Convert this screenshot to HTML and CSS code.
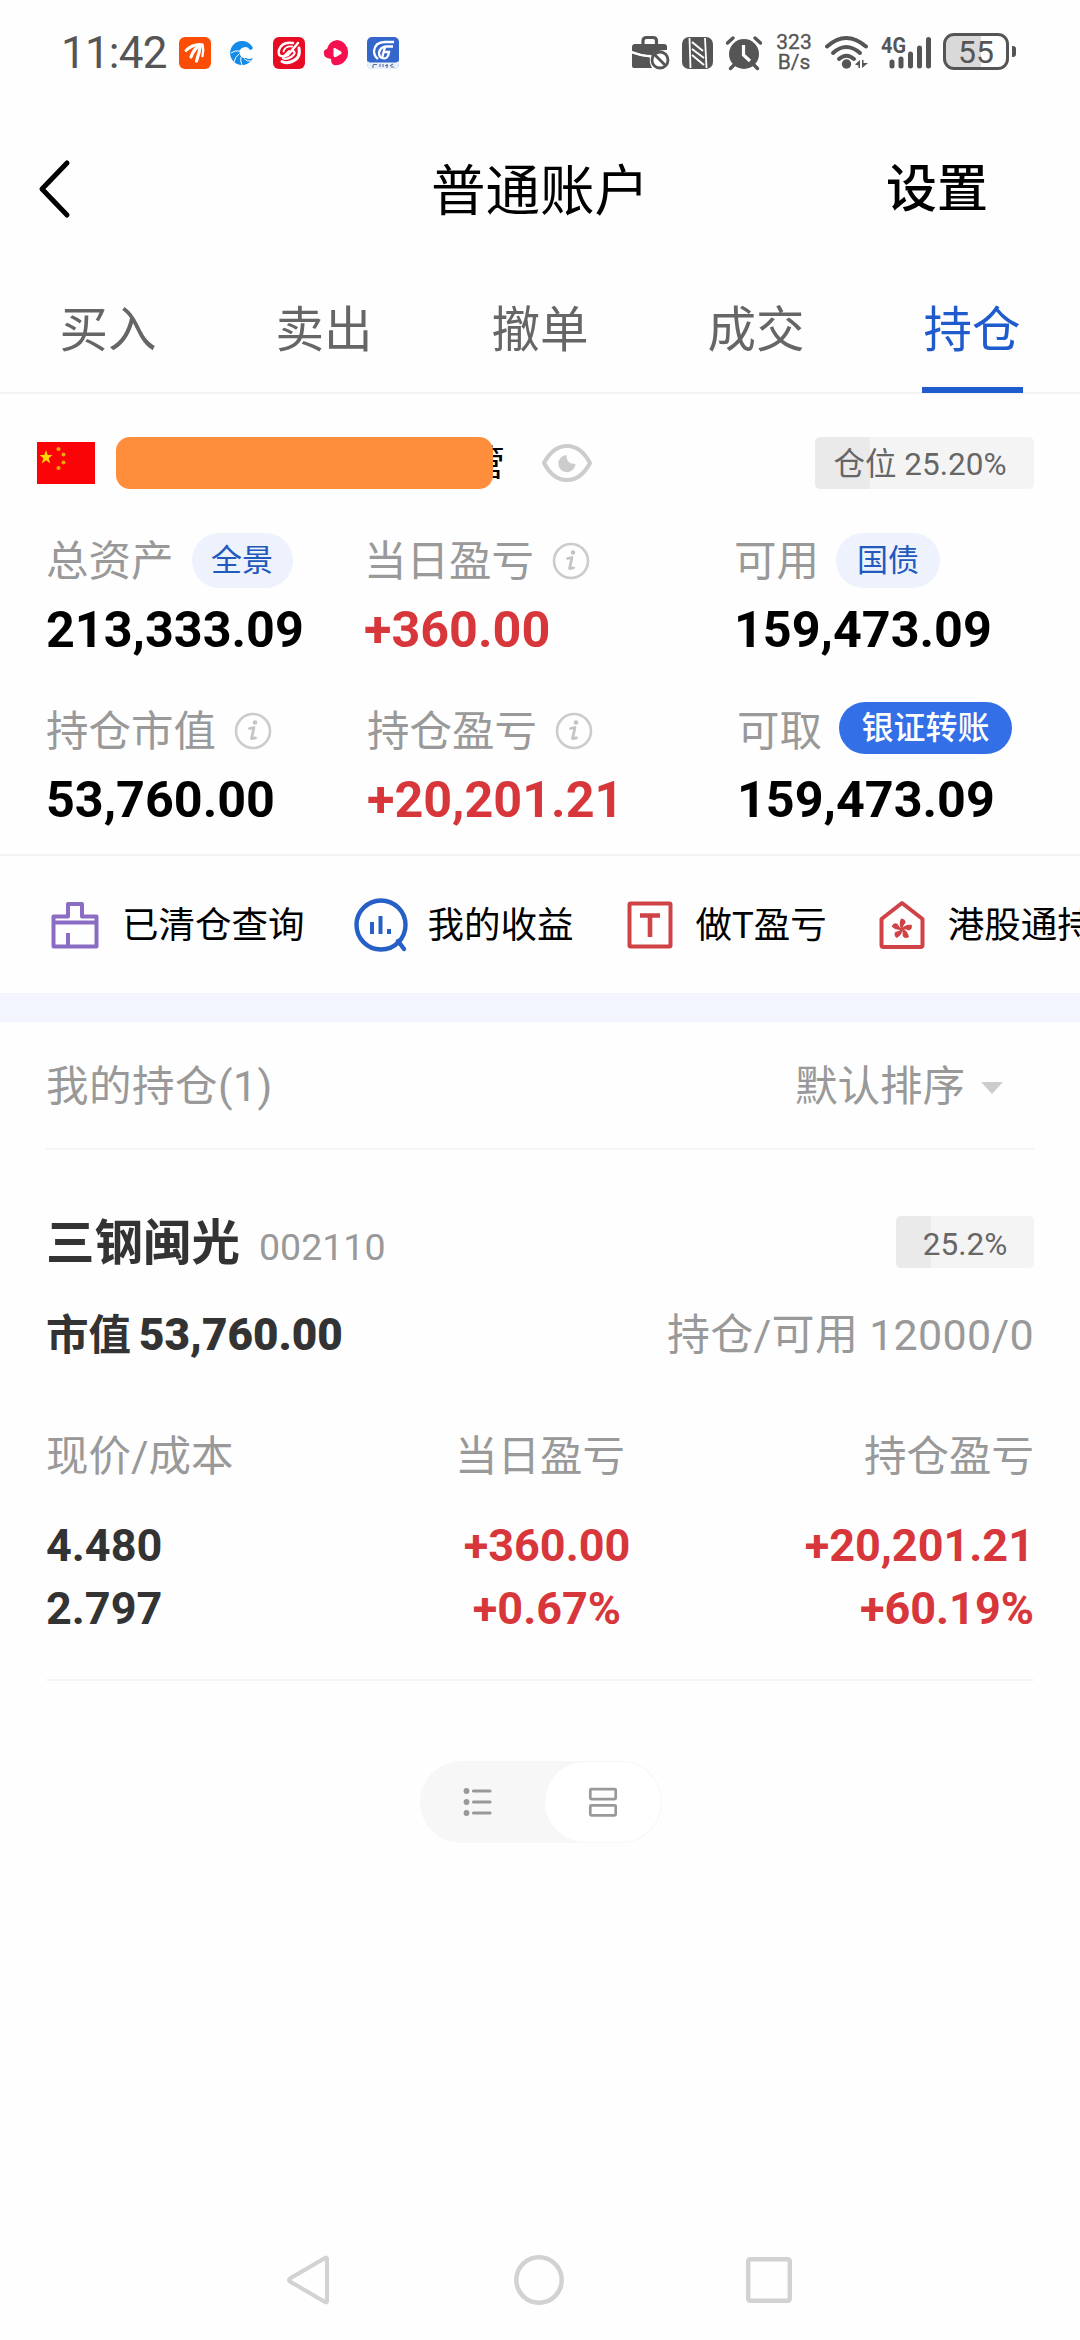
FILE: index.html
```html
<!DOCTYPE html>
<html lang="zh-CN">
<head>
<meta charset="utf-8">
<title>普通账户</title>
<link rel="stylesheet" href="styles.css">
</head>
<body>
<svg class="defs" width="0" height="0" aria-hidden="true">
  <symbol id="info" viewBox="0 0 38 38">
    <circle cx="19" cy="19" r="17" fill="none" stroke="#ccc" stroke-width="2.6"/>
    <circle cx="21" cy="10.5" r="2.3" fill="#c4c4c4"/>
    <path d="M15.5 16.5 L20 15.5 L17.5 26.5 L21.5 25.8" fill="none" stroke="#c4c4c4" stroke-width="2.8" stroke-linecap="round" stroke-linejoin="round"/>
  </symbol>
</svg>
<div class="screen">
  <header class="status">
    <span class="clock">11:42</span>
    <svg class="s-app1" width="32" height="32" viewBox="0 0 32 32"><rect width="32" height="32" rx="6" fill="#fb4d05"/><g fill="none" stroke="#fff" stroke-linecap="round"><path d="M7 13.500 Q13 7.500 21 7.500" stroke-width="3"/><path d="M12 20 Q14.500 12 21.500 8" stroke-width="3.200"/><path d="M17.500 24 Q20.500 15 21.500 8" stroke-width="3.200"/><path d="M23.500 19 Q25 13 23.500 7.500" stroke-width="2.400"/></g></svg>
    <svg class="s-app2" width="25" height="25" viewBox="0 0 25 25"><path d="M24 7 A12 12 0 1 0 24 17 Q20 19 17 17 A5.500 5.500 0 1 1 21 9 Q23 9 24 7Z" fill="#138be8"/><path d="M11 10 Q6 9 2 12 M10.500 12.500 Q6 16 5 21 M12 16 Q11 20 13 24 M15 17.500 Q18 21 22 20" fill="none" stroke="#fff" stroke-width="1"/></svg>
    <svg class="s-app3" width="32" height="32" viewBox="0 0 32 32"><rect width="32" height="32" rx="6" fill="#e80b24"/><g fill="none" stroke="#fff" stroke-linecap="round"><path d="M20 6 Q9 4 6 13 Q4 22 15 18 L25 6" stroke-width="2.500"/><path d="M19 9.500 Q12 9 10.500 14.500 M16 14 L12 18" stroke-width="1.800"/><path d="M20 14 Q24 16 18 20 Q13 23 10 21" stroke-width="2.200"/><path d="M26 11 Q28 21 19 24.500 Q13 27 9 24.500" stroke-width="3"/></g></svg>
    <svg class="s-app4" width="26" height="26" viewBox="0 0 26 26"><path d="M14 0 A12 12 0 0 1 25 13 A12 12 0 0 1 11 25 Q8 24 8 19 Q1 18 1 14 Q0 10 4 9 Q6 1 14 0Z" fill="#f51150"/><path d="M10.500 9 Q10.500 7.500 12 8 L18 11.500 Q19.500 13 18 14 L13 17 Q11 17.500 10.500 16Z" fill="#fff"/></svg>
    <svg class="s-app5" width="32" height="32" viewBox="0 0 32 32"><rect width="32" height="32" rx="5" fill="#3566cc"/><path d="M0 24 L3 25.500 H29 L32 24 V27 Q32 32 27 32 H5 Q0 32 0 27Z" fill="#e9f0fb"/><g fill="none" stroke="#fff" stroke-width="2.300"><path d="M27 5 H18 Q8 5 7 14 Q7 19 11 22"/><path d="M26 9.500 H19 Q13 10 12 16 Q12 20 15 21 Q21 23 22 15 H17"/><path d="M18 10 L15 21"/></g><path d="M6 28 V31 M6 27.500 H10 M13 27 V30 M16 27 V30 M18 28.500 H21 M20 27 V31 M23 29 L26 27 M24 30 H27" stroke="#57709c" stroke-width="1.100"/></svg>
    <svg class="s-case" width="38" height="36" viewBox="0 0 38 36"><path d="M11 9 V6 Q11 2.500 14.500 2.500 H21 Q24.500 2.500 24.500 6 V9" fill="none" stroke="#555" stroke-width="3.200"/><path d="M0 16 V12 Q0 9 3 9 H32 Q35 9 35 12 V15 Q23 14.500 19.500 21 Q10 20 0 16Z" fill="#555"/><path d="M0 18.500 Q9 22 18 22.500 Q17 28 20 33 H2 Q0 33 0 31Z" fill="#555"/><path d="M0 17.200 Q9 20.700 19.500 21" stroke="#fff" stroke-width="1.800" fill="none"/><circle cx="28" cy="25" r="8" fill="#fff" stroke="#555" stroke-width="2.800"/><path d="M22.500 19.500 L33.500 30.500" stroke="#555" stroke-width="2.800"/></svg>
    <svg class="s-nfc" width="32" height="32" viewBox="0 0 32 32"><rect width="31" height="32" rx="7" fill="#555"/><path d="M7.500 1 L8.500 31 M23 1 L24.500 31" fill="none" stroke="#fff" stroke-width="1.800"/><path d="M10 5 L21 14 M10 12 L22 21 M10 18 L22 28" fill="none" stroke="#fff" stroke-width="2"/></svg>
    <svg class="s-alarm" width="38" height="36" viewBox="0 0 38 36"><circle cx="19" cy="19" r="15" fill="#555"/><path d="M2.500 8 L8 3 M35.500 8 L30 3 M9 30 L5.500 33.500 M29 30 L32.500 33.500" stroke="#555" stroke-width="3.400" stroke-linecap="round"/><path d="M18.500 10 V20 L25 26" stroke="#fff" stroke-width="3.200" fill="none"/></svg>
    <div class="rate"><span>323</span><span>B/s</span></div>
    <svg class="s-wifi" width="46" height="36" viewBox="0 0 46 36"><g fill="none" stroke="#555" stroke-width="4" stroke-linecap="round"><path d="M3 11.500 Q22 -5.500 42 11.500"/><path d="M9 18 Q22 6 36 18"/><path d="M15 24 Q22.500 17.500 30 24"/></g><circle cx="22.500" cy="29" r="4.700" fill="#555"/><path d="M31 29.500 L36 25 V33 H34.500 V30.500Z M38 25 H39.500 V28 H44 L38 33Z" fill="#555"/></svg>
    <svg class="s-signal" width="56" height="44" viewBox="-4 -4 56 44"><text class="net" x="0" y="17.500" textLength="25" lengthAdjust="spacingAndGlyphs">4G</text><g stroke="#555" stroke-width="5" stroke-linecap="round"><path d="M11 27 V31 M20 24 V31 M29.500 19 V31 M38.500 13 V31 M47.500 4.500 V31"/></g></svg>
    <div class="battery"><span>55</span></div><i class="nub"></i>
  </header>

  <nav class="titlebar">
    <svg class="back" width="36" height="60" viewBox="0 0 36 60"><path d="M31 4 L6 30 L31 56" fill="none" stroke="#000" stroke-width="5" stroke-linecap="round" stroke-linejoin="round"/></svg>
    <h1>普通账户</h1>
    <a class="settings">设置</a>
  </nav>

  <nav class="tabs">
    <a><span>买入</span></a><a><span>卖出</span></a><a><span>撤单</span></a><a><span>成交</span></a><a class="active"><span>持仓</span></a>
  </nav>

  <section class="account">
    <svg class="flag" width="58" height="42" viewBox="0 0 58 42"><rect width="58" height="42" fill="#fb0407"/><path d="M9 8 L10.700 13 H15.500 L11.700 16.200 L13.200 21.500 L9 18.300 L4.800 21.500 L6.300 16.200 L2.500 13 H7.300Z" fill="#ffd800"/><g fill="#e9a40a"><circle cx="21.500" cy="7" r="2.100"/><circle cx="26.500" cy="12.500" r="2"/><circle cx="26.500" cy="20.500" r="2"/><circle cx="21.500" cy="26" r="2.100"/></g></svg>
    <span class="mask"></span><span class="owner">管</span>
    <svg class="eye" width="50" height="38" viewBox="0 0 50 38"><path d="M2 19 Q11 2 25 2 Q39 2 48 19 Q39 36 25 36 Q11 36 2 19Z" fill="none" stroke="#ccc" stroke-width="4" stroke-linejoin="round"/><path d="M24.500 11 Q24 20 33.500 20 A8.600 8.600 0 1 1 24.500 11Z" fill="#ccc"/></svg>
    <span class="ratio ratio-lg"><b>仓位 25.20%</b></span>
  </section>

  <section class="summary">
    <div class="cell"><div class="label"><span>总资产</span><em class="tag t1">全景</em></div><div class="value">213,333.09</div></div>
    <div class="cell"><div class="label"><span>当日盈亏</span><svg class="info"><use href="#info"/></svg></div><div class="value up">+360.00</div></div>
    <div class="cell"><div class="label"><span>可用</span><em class="tag t2">国债</em></div><div class="value">159,473.09</div></div>
  </section>
  <section class="summary second">
    <div class="cell"><div class="label"><span>持仓市值</span><svg class="info"><use href="#info"/></svg></div><div class="value">53,760.00</div></div>
    <div class="cell"><div class="label"><span>持仓盈亏</span><svg class="info"><use href="#info"/></svg></div><div class="value up">+20,201.21</div></div>
    <div class="cell"><div class="label"><span>可取</span><em class="tag solid">银证转账</em></div><div class="value">159,473.09</div></div>
  </section>

  <section class="shortcuts">
    <a class="q1"><svg width="48" height="50" viewBox="0 0 48 50"><g fill="none" stroke="#8a6cc4" stroke-width="4" stroke-linejoin="round"><path d="M2.500 16.500 H17 V4 H31 V16.500 H45.500 V46.500 H2.500Z"/><path d="M2.500 22.500 H45.500 M17 46 V33"/></g></svg><span>已清仓查询</span></a>
    <a class="q2"><svg width="54" height="54" viewBox="0 0 54 54"><circle cx="27" cy="27" r="24.500" fill="none" stroke="#265fc6" stroke-width="4.400"/><path d="M44 43 L50 51" stroke="#265fc6" stroke-width="4.400" stroke-linecap="round"/><path d="M18 24 V36 M26.500 18 V36 M35 31 V36" stroke="#265fc6" stroke-width="4"/></svg><span>我的收益</span></a>
    <a class="q3"><svg width="46" height="48" viewBox="0 0 46 48"><rect x="2.500" y="2.500" width="41" height="43" rx="1" fill="none" stroke="#cf4347" stroke-width="4"/><path d="M13 14.500 H33 M23 14.500 V36" stroke="#cf4347" stroke-width="4.600"/></svg><span>做T盈亏</span></a>
    <a class="q4"><svg width="46" height="50" viewBox="0 0 46 50"><path d="M2.500 19 L23 3 L43.500 19 V45 Q43.500 47 41.500 47 H4.500 Q2.500 47 2.500 45Z" fill="none" stroke="#cf4347" stroke-width="4" stroke-linejoin="round"/><g fill="#cf4347" transform="translate(23 29)"><path id="petal" d="M0 1 Q-4 -4 -1 -10.500 Q4 -10 3.500 -6 Q1 -4 0 1Z"/><use href="#petal" transform="rotate(72)"/><use href="#petal" transform="rotate(144)"/><use href="#petal" transform="rotate(216)"/><use href="#petal" transform="rotate(288)"/></g></svg><span>港股通持仓</span></a>
  </section>

  <div class="band"></div>

  <section class="holdings">
    <div class="list-head"><span>我的持仓(1)</span><span class="sort">默认排序<i></i></span></div>
    <article class="stock">
      <div class="name-row"><h2>三钢闽光</h2><span class="code">002110</span><span class="ratio ratio-sm"><b>25.2%</b></span></div>
      <div class="mv-row"><span class="mv">市值<b>53,760.00</b></span><span class="avail">持仓/可用 12000/0</span></div>
      <div class="trio heads"><span>现价/成本</span><span>当日盈亏</span><span>持仓盈亏</span></div>
      <div class="trio nums"><span>4.480</span><span class="up">+360.00</span><span class="up">+20,201.21</span></div>
      <div class="trio nums"><span>2.797</span><span class="up">+0.67%</span><span class="up">+60.19%</span></div>
    </article>
  </section>

  <div class="switch">
    <span class="opt"><svg width="30" height="30" viewBox="0 0 30 30"><g fill="#999"><circle cx="3.500" cy="4" r="2.900"/><circle cx="3.500" cy="15" r="2.900"/><circle cx="3.500" cy="26" r="2.900"/></g><path d="M10.500 4 H27 M10.500 15 H27 M10.500 26 H27" stroke="#999" stroke-width="3.200" stroke-linecap="round"/></svg></span>
    <span class="opt on"><svg width="30" height="30" viewBox="0 0 30 30"><g fill="none" stroke="#999" stroke-width="2.700"><rect x="2.300" y="2.100" width="25.400" height="10" rx="1"/><rect x="2.300" y="18.300" width="25.400" height="10" rx="1"/></g></svg></span>
  </div>

  <footer class="sysnav">
    <svg width="46" height="52" viewBox="0 0 46 52"><path d="M41 4.500 V47.500 Q40.500 49 39 48 L4 27.500 Q2 26 4 24.500 L39 4 Q40.500 3 41 4.500Z" fill="none" stroke="#d2d2d2" stroke-width="4"/></svg>
    <svg width="50" height="50" viewBox="0 0 50 50"><circle cx="25" cy="25" r="22.700" fill="none" stroke="#d2d2d2" stroke-width="4.500"/></svg>
    <svg width="46" height="46" viewBox="0 0 46 46"><rect x="2.200" y="2.200" width="41.600" height="41.600" rx="2" fill="none" stroke="#d2d2d2" stroke-width="4.400"/></svg>
  </footer>
</div>
</body>
</html>
```
FILE: styles.css
```css
* { box-sizing: border-box; margin: 0; padding: 0; }
body { background: #fefefe; font-family: Roboto, "Noto Sans CJK SC", sans-serif; color: #000; overflow: hidden; }
em, i { font-style: normal; }
svg { flex: none; display: block; }
.defs { display: none; }
.screen { width: 1080px; height: 2340px; overflow: hidden; display: flex; flex-direction: column; white-space: nowrap; line-height: 1; }
.screen > * { flex: none; }

.status { height: 106px; padding-left: 61px; display: flex; align-items: center; color: #555; }
.clock { width: 118px; font-size: 44px; letter-spacing: -0.8px; }
.s-app2 { margin-left: 18px; }
.s-app3 { margin-left: 19px; }
.s-app4 { margin-left: 18px; }
.s-app5 { margin-left: 18px; margin-right: 233px; }
.s-nfc { margin-left: 12px; }
.s-alarm { margin-left: 11px; }
.rate { width: 40px; margin: 0 0 2px 11px; display: flex; flex-direction: column; align-items: center; font-size: 21px; line-height: 20px; }
.rate span { height: 20px; -webkit-text-stroke: 0.3px #555; }
.s-wifi { margin-left: 10px; }
.s-signal { margin-left: 7px; }
.net { font: 700 22px Roboto, sans-serif; fill: #555; }
.battery { width: 66px; height: 37px; margin: 0 0 3px 10px; border: 3px solid #555; border-radius: 11px; background: linear-gradient(90deg, #d9d9d9 58%, #fefefe 58%); font-size: 32px; display: flex; align-items: center; justify-content: center; }
.nub { width: 4px; height: 11px; margin: 0 0 3px 3px; background: #555; border-radius: 0 3px 3px 0; }

.titlebar { height: 168px; display: grid; grid-template-columns: 260px 1fr 260px; align-items: center; }
.back { margin: 0 0 3px 36px; }
h1 { font-size: 54.500px; font-weight: 400; text-align: center; margin-top: 2px; }
.settings { font-size: 51px; font-weight: 500; margin: 0 0 1px 66px; }

.tabs { height: 120px; display: grid; grid-template-columns: repeat(5, 216px); border-bottom: 2px solid #f3f3f3; }
.tabs a { display: flex; justify-content: center; font-size: 48.500px; color: #666; }
.tabs span { width: 101px; height: 119px; padding-top: 33px; text-align: center; }
.tabs .active { color: #1f5bcc; }
.tabs .active span { border-bottom: 6px solid #1f5bcc; }

.account { height: 138px; padding: 0 46px 0 37px; display: flex; align-items: center; }
.mask { width: 377px; height: 52px; margin-left: 21px; border-radius: 14px; background: #ff8e3c; position: relative; z-index: 1; }
.owner { font-size: 36px; margin-left: -24px; padding-top: 2px; }
.eye { margin-left: 37px; margin-right: auto; }
.ratio { display: flex; align-items: center; justify-content: center; height: 52px; border-radius: 5px; color: #666; }
.ratio b { font-weight: 400; font-size: 31.500px; }
.ratio-lg { width: 219px; padding-right: 9px; background: linear-gradient(90deg, #eaeaea 55px, #f4f4f4 55px); }
.ratio-lg b { padding-top: 4px; }
.ratio-sm { width: 138px; background: linear-gradient(90deg, #eaeaea 35px, #f4f4f4 35px); }
.ratio-sm b { padding-top: 6px; }

.summary { height: 170px; padding-left: 46px; display: grid; grid-template-columns: 318px 370px 1fr; }
.summary.second { height: 154px; grid-template-columns: 321px 370px 1fr; border-bottom: 2px solid #f3f3f3; }
.label { height: 56px; display: flex; align-items: center; font-size: 42.500px; color: #999; }
.label span { padding-top: 4px; }
.second .label { height: 56px; }
.tag { height: 55px; border-radius: 28px; background: #edf2fc; color: #2159bd; font-size: 31px; display: flex; align-items: center; justify-content: center; }
.t1 { width: 101px; margin-left: 18px; }
.t2 { width: 104px; margin-left: 17px; }
.solid { width: 173px; height: 52px; margin-left: 17px; margin-bottom: 5px; background: #336fe7; color: #fff; font-size: 32px; font-weight: 500; }
.info { width: 38px; height: 38px; margin: 1px 0 0 18px; }
.value { font-size: 50.300px; font-weight: 700; margin-top: 17px; }
.up { color: #d7363a; }

.shortcuts { height: 137px; padding-left: 51px; display: flex; align-items: center; font-size: 36.500px; overflow: hidden; }
.shortcuts a { display: flex; align-items: center; flex: none; gap: 23px; }
.shortcuts span { padding-top: 4px; }
.shortcuts .q2 { margin-left: 49px; gap: 20px; }
.shortcuts .q3 { margin-left: 53px; gap: 23px; }
.q4 { margin-left: 52px; }
.band { height: 29px; background: #f2f5fd; }

.holdings { margin: 0 46px; color: #999; font-size: 42.500px; }
.list-head { height: 128px; padding-top: 5px; display: flex; justify-content: space-between; align-items: center; border-bottom: 2px solid #f5f5f5; }
.list-head > span:first-child { letter-spacing: 0.5px; }
.sort { display: flex; align-items: center; padding-right: 31px; }
.sort i { margin-left: 16px; border: 11px solid transparent; border-top: 12px solid #ccc; border-bottom: 0; }
.stock { height: 531px; padding-top: 58px; border-bottom: 2px solid #f5f5f5; }
.name-row { height: 68px; display: flex; align-items: center; }
h2 { font-size: 48.500px; font-weight: 700; color: #333; padding-top: 4px; }
.code { font-size: 37.500px; margin: 11px auto 0 19px; }
.mv-row { height: 114px; padding-top: 4px; display: flex; justify-content: space-between; align-items: center; }
.mv { color: #333; font-weight: 700; }
.mv b { font-size: 44px; margin-left: 8px; }
.avail { font-size: 43px; letter-spacing: 0.3px; }
.trio { display: grid; grid-template-columns: 1fr 1fr 1fr; }
.trio span:nth-child(2) { text-align: center; }
.trio span:nth-child(3) { text-align: right; }
.heads { height: 113px; padding-top: 46px; }
.nums { height: 63px; padding-top: 20px; font-size: 45px; font-weight: 700; color: #333; }
.nums .up { color: #d7363a; }
.trio.nums span:nth-child(2) { padding-left: 14px; }

.switch { width: 242px; height: 82px; margin: 80px 0 0 420px; border-radius: 41px; background: #f7f7f7; display: flex; justify-content: space-between; padding: 1px; }
.opt { width: 111px; display: flex; align-items: center; justify-content: center; }
.opt:first-child { margin-left: 1px; }
.opt.on { width: 116px; border-radius: 40px; background: #fff; }

.sysnav { margin: auto 0 34px; padding: 0 288px 0 286px; display: flex; justify-content: space-between; align-items: center; }
```
